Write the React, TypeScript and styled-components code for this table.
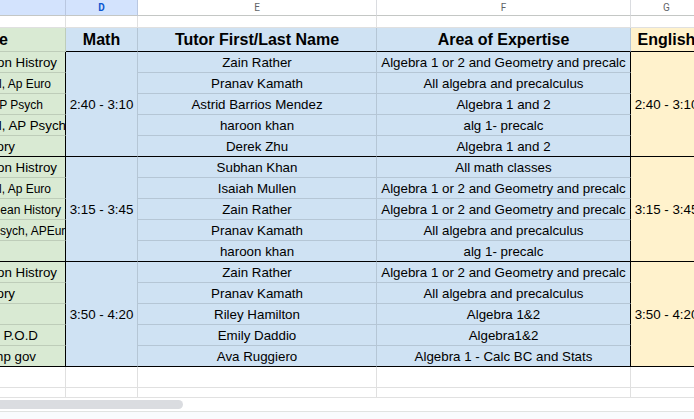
import * as React from 'react'
import styled, { createGlobalStyle } from 'styled-components'

const GlobalStyle = createGlobalStyle`
  html, body {
    margin: 0;
    padding: 0;
    background: #fff;
  }
  body {
    font-family: 'Liberation Sans', Arial, sans-serif;
  }
`

// visible part of columns C..G, the sheet is scrolled to the right
const COLS = '66px 72px 239px 254px 72px'
const SUBJECT_WIDTH = 65
const GRID = 'rgba(0, 0, 0, 0.12)'
const BLACK = '#000'
const GREEN = '#d9ead3'
const BLUE = '#cfe2f3'
const YELLOW = '#fff2cc'

const Window = styled.div`
  width: 694px;
  height: 419px;
  overflow: hidden;
  display: flex;
  flex-direction: column;
  background: #fff;
`

const ColumnBar = styled.div`
  display: grid;
  grid-template-columns: ${COLS};
  height: 16px;
  flex-shrink: 0;
`

const ColumnLetter = styled.div<{ $selected?: boolean }>`
  box-sizing: border-box;
  border-right: 1px solid ${(p) => (p.$selected ? '#b9c7e0' : '#dadce0')};
  border-bottom: 1px solid #c4c7c5;
  background: ${(p) => (p.$selected ? '#d3e3fd' : '#fff')};
  color: ${(p) => (p.$selected ? '#0b57d0' : '#5f6368')};
  font-family: Roboto, 'Liberation Sans', sans-serif;
  font-size: 10px;
  font-weight: ${(p) => (p.$selected ? 700 : 400)};
  display: flex;
  align-items: center;
  justify-content: center;
`

const Sheet = styled.div`
  height: 381px;
  flex-shrink: 0;
  overflow: hidden;
  display: grid;
  grid-template-columns: ${COLS};
  grid-template-rows: 12px 24px repeat(17, 21px);
  align-content: start;
`

type CellProps = {
  $bg?: string
  $right?: string
  $bottom?: string
  $span?: number
}

const Cell = styled.div<CellProps>`
  box-sizing: border-box;
  min-width: 0;
  overflow: hidden;
  white-space: nowrap;
  padding-top: 2px;
  background: ${(p) => p.$bg ?? '#fff'};
  border-right: 1px solid ${(p) => p.$right ?? GRID};
  border-bottom: 1px solid ${(p) => p.$bottom ?? GRID};
  grid-row: ${(p) => (p.$span ? `span ${p.$span}` : 'auto')};
  display: flex;
  align-items: center;
  justify-content: center;
  font-size: 10pt;
  line-height: 16px;
  color: #000;
`

const HeaderCell = styled(Cell)`
  padding-top: 0;
  font-size: 12pt;
  font-weight: 700;
  line-height: 18px;
`

const SubjectCell = styled(Cell)<{ $size?: number; $bold?: boolean }>`
  justify-content: flex-end;
  padding-top: ${(p) => (p.$bold ? 0 : 2)}px;
  font-size: ${(p) => p.$size ?? 10}pt;
  font-weight: ${(p) => (p.$bold ? 700 : 400)};
`

const SubjectText = styled.span<{ $end: number }>`
  flex-shrink: 0;
  margin-right: ${(p) => SUBJECT_WIDTH - p.$end}px;
`

const ScrollTrack = styled.div`
  height: 15px;
  box-sizing: border-box;
  flex-shrink: 0;
  padding-top: 2px;
  border-top: 1px solid #e1e1e1;
  border-bottom: 1px solid #e1e3e1;
  overflow: hidden;
`

const ScrollThumb = styled.div`
  width: 189px;
  height: 9px;
  margin-left: -6px;
  border-radius: 5px;
  background: #dadce0;
`

const TabStrip = styled.div`
  flex: 1;
  background: #f9fbfd;
`

// visible tail of the text, x where it ends, font size in pt
type Subject = [string, number, number?]

type Row = {
  subject: Subject
  tutor: string
  area: string
}

type Group = {
  time: string
  rows: Row[]
}

const ALG = 'Algebra 1 or 2 and Geometry and precalc'
const ALL_ALG = 'All algebra and precalculus'

const groups: Group[] = [
  {
    time: '2:40 - 3:10',
    rows: [
      { subject: ['on Histroy', 57], tutor: 'Zain Rather', area: ALG },
      { subject: ['l, Ap Euro', 51, 9], tutor: 'Pranav Kamath', area: ALL_ALG },
      { subject: ['P Psych', 43, 9], tutor: 'Astrid Barrios Mendez', area: 'Algebra 1 and 2' },
      { subject: ['l, AP Psych', 66], tutor: 'haroon khan', area: 'alg 1- precalc' },
      { subject: ['ory', 15], tutor: 'Derek Zhu', area: 'Algebra 1 and 2' },
    ],
  },
  {
    time: '3:15 - 3:45',
    rows: [
      { subject: ['on Histroy', 57], tutor: 'Subhan Khan', area: 'All math classes' },
      { subject: ['l, Ap Euro', 51, 9], tutor: 'Isaiah Mullen', area: ALG },
      { subject: ['ean History', 61, 9], tutor: 'Zain Rather', area: ALG },
      { subject: ['sych, APEuro', 72, 9], tutor: 'Pranav Kamath', area: ALL_ALG },
      { subject: ['', 65], tutor: 'haroon khan', area: 'alg 1- precalc' },
    ],
  },
  {
    time: '3:50 - 4:20',
    rows: [
      { subject: ['on Histroy', 57], tutor: 'Zain Rather', area: ALG },
      { subject: ['ory', 15], tutor: 'Pranav Kamath', area: ALL_ALG },
      { subject: ['', 65], tutor: 'Riley Hamilton', area: 'Algebra 1&2' },
      { subject: [' P.O.D', 38], tutor: 'Emily Daddio', area: 'Algebra1&2' },
      { subject: ['mp gov', 36], tutor: 'Ava Ruggiero', area: 'Algebra 1 - Calc BC and Stats' },
    ],
  },
]

const BlankRow = () => (
  <>
    <Cell />
    <Cell />
    <Cell />
    <Cell />
    <Cell />
  </>
)

const GroupRows = ({ group }: { group: Group }) => (
  <>
    {group.rows.map((row, i) => {
      const last = i === group.rows.length - 1
      const bottom = last ? BLACK : GRID
      const [text, end, size] = row.subject
      return (
        <React.Fragment key={i}>
          <SubjectCell $bg={GREEN} $right={BLACK} $bottom={bottom} $size={size}>
            <SubjectText $end={end}>{text}</SubjectText>
          </SubjectCell>
          {i === 0 && (
            <Cell $bg={BLUE} $bottom={BLACK} $span={group.rows.length}>
              {group.time}
            </Cell>
          )}
          <Cell $bg={BLUE} $bottom={bottom}>
            {row.tutor}
          </Cell>
          <Cell $bg={BLUE} $right={BLACK} $bottom={bottom}>
            {row.area}
          </Cell>
          {i === 0 && (
            <Cell $bg={YELLOW} $right={BLACK} $bottom={BLACK} $span={group.rows.length}>
              {group.time}
            </Cell>
          )}
        </React.Fragment>
      )
    })}
  </>
)

export default function App() {
  return (
    <Window>
      <GlobalStyle />
      <ColumnBar>
        <ColumnLetter $selected />
        <ColumnLetter $selected>D</ColumnLetter>
        <ColumnLetter>E</ColumnLetter>
        <ColumnLetter>F</ColumnLetter>
        <ColumnLetter>G</ColumnLetter>
      </ColumnBar>

      <Sheet>
        <BlankRow />

        <SubjectCell $bg={GREEN} $size={12} $bold>
          <SubjectText $end={8}>e</SubjectText>
        </SubjectCell>
        <HeaderCell $bg={BLUE} $bottom={BLACK}>Math</HeaderCell>
        <HeaderCell $bg={BLUE} $bottom={BLACK}>Tutor First/Last Name</HeaderCell>
        <HeaderCell $bg={BLUE} $bottom={BLACK}>Area of Expertise</HeaderCell>
        <HeaderCell $bg={YELLOW} $bottom={BLACK}>English</HeaderCell>

        {groups.map((g) => (
          <GroupRows key={g.time} group={g} />
        ))}

        <BlankRow />
        <BlankRow />
      </Sheet>

      <ScrollTrack>
        <ScrollThumb />
      </ScrollTrack>
      <TabStrip />
    </Window>
  )
}
